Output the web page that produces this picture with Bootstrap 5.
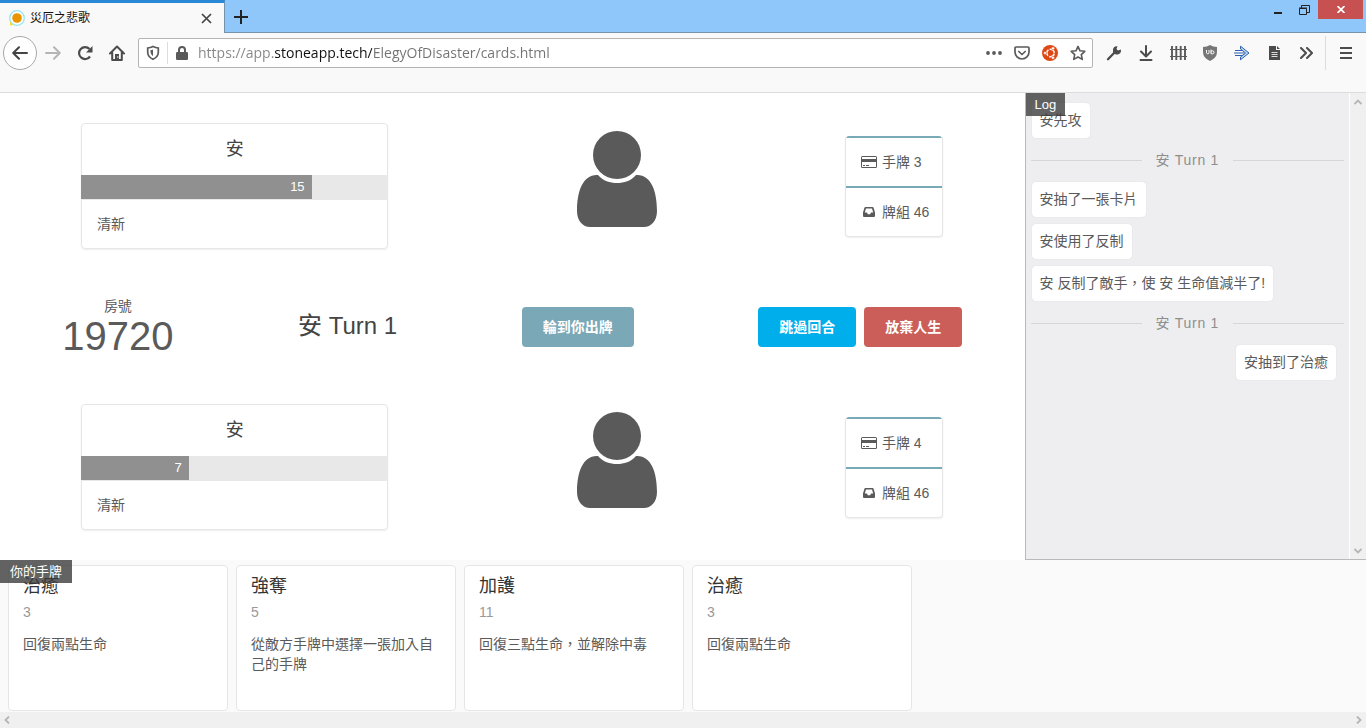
<!DOCTYPE html>
<html lang="zh-Hant">
<head>
<meta charset="utf-8">
<meta name="viewport" content="width=device-width, initial-scale=1">
<title>災厄之悲歌</title>
<link href="https://cdn.jsdelivr.net/npm/bootstrap@5.3.0/dist/css/bootstrap.min.css" rel="stylesheet">
<style>
  body { font-family: "Liberation Sans", "Noto Sans CJK TC", sans-serif; font-size: 14px; line-height: 20px; color: #5a5a5a; background: #fff; }
  svg { display: block; flex: none; }

  /* Browser chrome */
  .tab-strip { background: #8fc7fb; height: 33px; box-shadow: inset 0 -1px #7594ab; }
  .site-tab { width: 225px; background: #f9f9f9; border-top: 3px solid #2a88d6; border-right: 1px solid #7594ab; padding: 0 12px 0 8px; font-size: 12px; color: #111; }
  .bare { border: 0; background: none; padding: 0; color: #4c4c4c; display: flex; align-items: center; justify-content: center; }
  .new-tab { width: 32px; color: #222; }
  .win { height: 19px; width: 26px; color: #222; }
  .win-close { width: 45px; background: #c75050; color: #fff; margin-left: 1px; }
  .win-group { margin-right: 3px; }
  .tools { background: #f9f9f9; border-bottom: 1px solid #dcdcdc; padding: 3px 4px 22px 3px; }
  .tool { width: 32px; height: 34px; }
  .tool-back { width: 34px; border: 1px solid #a9a9a9; border-radius: 50%; background: #fff; }
  .menu-rule { width: 1px; height: 34px; background: #ddd; margin: 0 4px 0 3px; }
  .address { height: 30px; background: #fff; border: 1px solid #b4b4b4; border-radius: 2px; margin: 0 5px; }
  .address-btn { width: 28px; height: 28px; }
  .address-rule { width: 1px; height: 22px; background: #ddd; }
  .address-input { border: 0; outline: 0; padding: 0; margin-left: 2px; min-width: 0; font: 14px/26px "Open Sans", sans-serif; color: #737373;
    background: linear-gradient(90deg, #858585 77px, #111 77px 174px, #737373 174px); -webkit-background-clip: text; background-clip: text; -webkit-text-fill-color: transparent; }

  /* Board */
  .board { padding: 30px 0; }
  .fighter { width: 30%; border: 1px solid #e6e6e6; border-radius: 4px; box-shadow: 0 1px 2px #eee; }
  .fighter-name { font-size: 18px; line-height: 51px; color: #444; margin: 0; }
  .life { height: 25px; border-radius: 0; background: #e8e8e8; margin: 0 -1px; --bs-progress-bar-bg: #909090; font-size: 13px; }
  .life .progress-bar { padding-right: 7px; text-align: right; height: 24px; }
  .fighter-state { padding: 14px 15px; margin: 0; }
  .avatar { width: 132px; padding-bottom: 14px; }
  .piles { border: 1px solid #e6e6e6; border-top: 0; border-radius: 4px; box-shadow: 0 1px 2px #eee; list-style: none; margin: 0; padding: 0; overflow: hidden; }
  .pile { padding: 14px 13px 14px 15px; gap: 5px; }
  .pile-hand { border-top: 2px solid #78a9b6; border-bottom: 2px solid #78a9b6; }
  .room-no { font-size: 40px; line-height: 40px; }
  .room { padding-bottom: 2px; }
  .turn-title { font-size: 24px; line-height: 30px; color: #444; margin: 0; padding-bottom: 2px; }
  .act { --bs-btn-font-size: 14px; --bs-btn-font-weight: 700; --bs-btn-line-height: 20px; --bs-btn-padding-x: 21px; --bs-btn-padding-y: 10px; --bs-btn-border-radius: 4px; --bs-btn-border-width: 0; --bs-btn-color: #fff; --bs-btn-hover-color: #fff; }
  .act-wait { --bs-btn-bg: #7aa8b7; --bs-btn-hover-bg: #6d9bab; }
  .act-skip { --bs-btn-bg: #00aeeb; --bs-btn-hover-bg: #009fd8; }
  .act-quit { --bs-btn-bg: #cb5e58; --bs-btn-hover-bg: #bb514b; }

  /* Log */
  .corner-tag { position: absolute; top: 0; left: 0; background: rgba(60, 60, 60, .8); color: #fff; font-size: 13px; line-height: 23px; padding: 0 10px; font-weight: 400; margin: 0; }
  .log { background: #eeeef0; border-left: 1px solid #b9b9bb; border-bottom: 1px solid #b9b9bb; }
  .log-tag { padding: 0 9px; }
  .log-list { padding: 10px 5px; }
  .said { background: #fff; border-radius: 4px; padding: 7px 8px 8px; margin-left: 1px; box-shadow: 0 0 1px #ccc; }
  .said + .said { margin-top: 7px; }
  .said-own { margin-right: 8px; }
  .log-turn { height: 44px; gap: 14px; color: #8e8e8e; letter-spacing: .05em; }
  .log-turn::before, .log-turn::after { content: ""; flex: 1; height: 1px; background: #d6d6d8; }
  .bar-y { width: 17px; background: #f0f0f0; border-left: 1px solid #fff; padding: 6px 0 5px; }

  /* Hand */
  .hand { background: #fafafa; padding: 5px 8px 1px; gap: 8px; }
  .hand-card { width: 220px; min-height: 146px; background: #fff; border: 1px solid #e6e6e6; border-radius: 4px; padding: 8px 14px; }
  .hand-name { font-size: 18px; line-height: 24px; color: #333; margin: 0; }
  .hand-cost { color: #999; line-height: 20px; margin: 4px 0 12px; }
  .bar-x { height: 16px; background: #f0f0f0; padding: 0 4px; }
</style>
</head>
<body>
<svg class="d-none" aria-hidden="true">
  <symbol id="i-user" viewBox="0 0 80 96"><circle cx="40" cy="24" r="24" fill="#5a5a5a"/><path fill="#5a5a5a" d="M21 44C26 50 33 52 40 52s14-2 19-8C74 43 80 60 80 80c0 10-6 16-13 16H13C6 96 0 90 0 80 0 60 6 43 21 44Z"/></symbol>
  <symbol id="i-card" viewBox="0 0 16 12"><path fill="#5a5a5a" fill-rule="evenodd" d="M1.500 0h13A1.500 1.500 0 0 1 16 1.500v9a1.500 1.500 0 0 1-1.500 1.500h-13A1.500 1.500 0 0 1 0 10.500v-9A1.500 1.500 0 0 1 1.500 0ZM1 1v2h14V1ZM1 6v5h14V6ZM2 9h2v1H2Zm3 0h3v1H5Z"/></symbol>
  <symbol id="i-inbox" viewBox="0 0 16 12"><path fill="#5a5a5a" fill-rule="evenodd" d="M4.500 1h7q.8 0 1.100.8L14 6.500V10q0 1-1 1H3q-1 0-1-1V6.500L3.400 1.800Q3.700 1 4.500 1ZM5 2.500 3.800 6.500H6l.8 1.700h2.400L10 6.500h2.200L11 2.500Z"/></symbol>
</svg>

<div class="d-flex flex-column min-vh-100">
  <header>
    <div class="tab-strip d-flex align-items-stretch">
      <div class="site-tab d-flex align-items-center">
        <svg width="18" height="18" viewBox="0 0 18 18" class="me-1"><circle cx="9" cy="9" r="7.300" fill="#fff" stroke="#8fe6ee" stroke-width="1.300"/><path d="M2 12q1 3 4 4l-4 .5Z" fill="#f3dd35"/><circle cx="9" cy="9" r="4.800" fill="#ea9400"/></svg>
        <span class="flex-grow-1">災厄之悲歌</span>
        <button class="bare" type="button" aria-label="關閉分頁"><svg width="11" height="11" viewBox="0 0 11 11" stroke="#444" stroke-width="1.700"><path d="M1 1l9 9M10 1l-9 9"/></svg></button>
      </div>
      <button class="bare new-tab" type="button" aria-label="新分頁"><svg width="14" height="14" viewBox="0 0 14 14" stroke="currentColor" stroke-width="2"><path d="M7 0v14M0 7h14"/></svg></button>
      <div class="d-flex ms-auto align-items-start win-group">
        <button class="bare win" type="button" aria-label="最小化"><svg width="8" height="8" viewBox="0 0 8 8"><path d="M0 6h8v2H0Z" fill="#222"/></svg></button>
        <button class="bare win" type="button" aria-label="還原"><svg width="11" height="10" viewBox="0 0 11 10" fill="none" stroke="#222"><path d="M.5 3.500h7v6h-7Z M0 3h8M2.500 3V.5h8v7H8"/></svg></button>
        <button class="bare win win-close" type="button" aria-label="關閉"><svg width="8" height="7" viewBox="0 0 8 7" stroke="#fff" stroke-width="1.700"><path d="M.5 0l7 7M7.500 0l-7 7"/></svg></button>
      </div>
    </div>
    <div class="tools d-flex align-items-center">
      <button class="bare tool tool-back" type="button" aria-label="上一頁"><svg width="16" height="14" viewBox="0 0 16 14" fill="none" stroke="#444" stroke-width="2" stroke-linecap="round" stroke-linejoin="round"><path d="M15 7H1.500M7 1.200 1.200 7 7 12.800"/></svg></button>
      <button class="bare tool" type="button" aria-label="下一頁"><svg width="16" height="14" viewBox="0 0 16 14" fill="none" stroke="#b5b5b5" stroke-width="2" stroke-linecap="round" stroke-linejoin="round"><path d="M1 7h13.500M9 1.200 14.800 7 9 12.800"/></svg></button>
      <button class="bare tool" type="button" aria-label="重新整理"><svg width="16" height="16" viewBox="0 0 16 16"><path d="M13 11.500A6 6 0 1 1 12.500 4" fill="none" stroke="#4c4c4c" stroke-width="2.200"/><path d="M15.500 1v6.500H9Z" fill="#4c4c4c"/></svg></button>
      <button class="bare tool" type="button" aria-label="首頁"><svg width="16" height="16" viewBox="0 0 16 16"><path d="M1 8.500 8 1.500l7 7M3.200 7.500V15h9.600V7.500" fill="none" stroke="#4c4c4c" stroke-width="2" stroke-linejoin="round" stroke-linecap="round"/><path d="M6 15V9h4v6Z" fill="#4c4c4c"/><circle cx="8.800" cy="12" r=".7" fill="#fff"/></svg></button>
      <div class="address d-flex align-items-center flex-grow-1">
        <button class="bare address-btn" type="button" aria-label="追蹤保護"><svg width="14" height="16" viewBox="0 0 14 16"><path d="M7 1.500Q9.500 2.800 12.300 3v4.500Q12 12 7 14.300 2 12 1.700 7.500V3Q4.500 2.800 7 1.500Z" fill="none" stroke="#5a5a5a" stroke-width="1.700"/><path d="M7 4.500v6.800Q4.500 9.500 4.500 7V5Q6 5 7 4.500Z" fill="#5a5a5a"/></svg></button>
        <span class="address-rule"></span>
        <button class="bare address-btn" type="button" aria-label="網站資訊"><svg width="12" height="14" viewBox="0 0 12 14"><path d="M3 7V4a3 3 0 0 1 6 0v3" fill="none" stroke="#5a5a5a" stroke-width="2"/><rect y="6" width="12" height="8" rx="1.200" fill="#5a5a5a"/></svg></button>
        <input class="address-input flex-grow-1" type="text" aria-label="網址" value="https://app.stoneapp.tech/ElegyOfDisaster/cards.html">
        <button class="bare address-btn" type="button" aria-label="更多"><svg width="16" height="4" viewBox="0 0 16 4" fill="#5a5a5a"><circle cx="2" cy="2" r="1.900"/><circle cx="8" cy="2" r="1.900"/><circle cx="14" cy="2" r="1.900"/></svg></button>
        <button class="bare address-btn" type="button" aria-label="Pocket"><svg width="16" height="14" viewBox="0 0 16 14" fill="none" stroke="#5a5a5a" stroke-width="1.700" stroke-linecap="round" stroke-linejoin="round"><path d="M2 1h12q1 0 1 1v4a7 7 0 0 1-14 0V2q0-1 1-1ZM4.800 5.500 8 8.500l3.200-3"/></svg></button>
        <button class="bare address-btn" type="button" aria-label="Ubuntu"><svg width="16" height="16" viewBox="0 0 16 16"><circle cx="8" cy="8" r="8" fill="#dd4814"/><circle cx="8.500" cy="8" r="3.700" fill="none" stroke="#fff" stroke-width="1.500" stroke-dasharray="6.500 1.250" stroke-dashoffset="-.6"/><g fill="#fff" stroke="#dd4814" stroke-width=".5"><circle cx="3" cy="8" r="1.500"/><circle cx="11" cy="3.300" r="1.500"/><circle cx="11" cy="12.700" r="1.500"/></g></svg></button>
        <button class="bare address-btn" type="button" aria-label="書籤"><svg width="16" height="16" viewBox="0 0 16 16"><path d="m8 1.400 2 4.400 4.800.5-3.500 3.300 1 4.800L8 12l-4.300 2.400 1-4.800L1.200 6.300 6 5.800Z" fill="none" stroke="#5a5a5a" stroke-width="1.600" stroke-linejoin="round"/></svg></button>
      </div>
      <button class="bare tool" type="button" aria-label="工具"><svg width="16" height="16" viewBox="0 0 16 16"><path d="M2 14.200 8.500 7.500" stroke="#4c4c4c" stroke-width="2.300" stroke-linecap="round"/><path d="M11.500 1.200 10.500 4l1.500 1.500 2.900-1Q15.500 7.500 13 9q-2 1-4 0L7 7Q6.300 4 8 2.300 9.500.9 11.500 1.200Z" fill="#4c4c4c"/></svg></button>
      <button class="bare tool" type="button" aria-label="下載"><svg width="14" height="16" viewBox="0 0 14 16" fill="none" stroke="#4c4c4c" stroke-width="2" stroke-linecap="round" stroke-linejoin="round"><path d="M7 1v10M2 6.500l5 5 5-5M1.500 15h11"/></svg></button>
      <button class="bare tool" type="button" aria-label="柵欄"><svg width="17" height="14" viewBox="0 0 17 14" stroke="#5a5a5a"><path d="M2 0v14M6.300 0v14M10.700 0v14M15 0v14" stroke-width="1.900"/><path d="M0 3.500h17M0 10.500h17" stroke-width="1.200"/></svg></button>
      <button class="bare tool" type="button" aria-label="uBlock"><svg width="14" height="16" viewBox="0 0 14 16"><path d="M7 0q3 2 7 2v5q0 6-7 9-7-3-7-9V2q4 0 7-2Z" fill="#777"/><path d="M3.500 5v2.500q0 1.300 1.300 1.300T6 7.500V5M8 4.500v4.300M8 7.300a1.500 1.500 0 1 1 1.500 1.500H8" fill="none" stroke="#fff"/></svg></button>
      <button class="bare tool" type="button" aria-label="轉向"><svg width="16" height="16" viewBox="0 0 16 16" fill="none" stroke="#2f5fae"><path d="M1 5.500h8M0 8h10M1 10.500h8" stroke-width="1.100"/><path d="M6.500 4V1.200L15 8l-8.500 6.800V12L11.500 8Z" fill="#b8d6f5"/></svg></button>
      <button class="bare tool" type="button" aria-label="文件"><svg width="11" height="14" viewBox="0 0 11 14"><path d="M0 0h7v4h4v10H0ZM8 0l3 3H8Z" fill="#4c4c4c"/><path d="M2.500 6.500h6M2.500 8.500h6M2.500 10.500h6" stroke="#ddd"/></svg></button>
      <button class="bare tool" type="button" aria-label="更多工具"><svg width="13" height="12" viewBox="0 0 13 12" fill="none" stroke="#4c4c4c" stroke-width="2" stroke-linecap="round" stroke-linejoin="round"><path d="m1 1 5 5-5 5M7 1l5 5-5 5"/></svg></button>
      <span class="menu-rule"></span>
      <button class="bare tool" type="button" aria-label="選單"><svg width="12" height="12" viewBox="0 0 12 12" stroke="#4c4c4c" stroke-width="2"><path d="M0 1h12M0 6h12M0 11h12"/></svg></button>
    </div>
  </header>

  <main class="row g-0 flex-grow-1">
    <section class="col-9 board d-flex flex-column justify-content-between">
      <div class="d-flex justify-content-around align-items-center">
        <article class="fighter">
          <h2 class="fighter-name text-center fw-normal">安</h2>
          <div class="progress life" role="progressbar" aria-label="生命值" aria-valuenow="15" aria-valuemin="0" aria-valuemax="20"><div class="progress-bar" style="width:75%">15</div></div>
          <p class="fighter-state">清新</p>
        </article>
        <div class="avatar d-flex justify-content-center"><svg width="80" height="96"><use href="#i-user"/></svg></div>
        <ul class="piles">
          <li class="pile pile-hand d-flex align-items-center"><svg width="16" height="12"><use href="#i-card"/></svg>手牌 3</li>
          <li class="pile d-flex align-items-center"><svg width="16" height="12"><use href="#i-inbox"/></svg>牌組 46</li>
        </ul>
      </div>

      <div class="d-flex justify-content-around align-items-center">
        <div class="room text-center">
          <div>房號</div>
          <div class="room-no">19720</div>
        </div>
        <h1 class="turn-title fw-normal">安 Turn 1</h1>
        <button class="btn act act-wait" type="button">輪到你出牌</button>
        <div class="d-flex gap-2">
          <button class="btn act act-skip" type="button">跳過回合</button>
          <button class="btn act act-quit" type="button">放棄人生</button>
        </div>
      </div>

      <div class="d-flex justify-content-around align-items-center">
        <article class="fighter">
          <h2 class="fighter-name text-center fw-normal">安</h2>
          <div class="progress life" role="progressbar" aria-label="生命值" aria-valuenow="7" aria-valuemin="0" aria-valuemax="20"><div class="progress-bar" style="width:35%">7</div></div>
          <p class="fighter-state">清新</p>
        </article>
        <div class="avatar d-flex justify-content-center"><svg width="80" height="96"><use href="#i-user"/></svg></div>
        <ul class="piles">
          <li class="pile pile-hand d-flex align-items-center"><svg width="16" height="12"><use href="#i-card"/></svg>手牌 4</li>
          <li class="pile d-flex align-items-center"><svg width="16" height="12"><use href="#i-inbox"/></svg>牌組 46</li>
        </ul>
      </div>
    </section>

    <aside class="col-3 log d-flex position-relative">
      <h2 class="corner-tag log-tag">Log</h2>
      <div class="log-list flex-grow-1 d-flex flex-column">
        <div class="said align-self-start">安先攻</div>
        <div class="log-turn d-flex align-items-center">安 Turn 1</div>
        <div class="said align-self-start">安抽了一張卡片</div>
        <div class="said align-self-start">安使用了反制</div>
        <div class="said align-self-start">安 反制了敵手，使 安 生命值減半了!</div>
        <div class="log-turn d-flex align-items-center">安 Turn 1</div>
        <div class="said said-own align-self-end">安抽到了治癒</div>
      </div>
      <div class="bar-y d-flex flex-column justify-content-between align-items-center">
        <svg width="8" height="6" viewBox="0 0 8 6" fill="none" stroke="#b5b5b5" stroke-width="1.800"><path d="m.5 5 3.500-3.500L7.500 5"/></svg>
        <svg width="8" height="6" viewBox="0 0 8 6" fill="none" stroke="#b5b5b5" stroke-width="1.800"><path d="M.5 1 4 4.500 7.500 1"/></svg>
      </div>
    </aside>
  </main>

  <footer>
    <div class="hand d-flex position-relative">
      <article class="hand-card"><h3 class="hand-name fw-normal">治癒</h3><p class="hand-cost">3</p><p class="mb-0">回復兩點生命</p></article>
      <article class="hand-card"><h3 class="hand-name fw-normal">強奪</h3><p class="hand-cost">5</p><p class="mb-0">從敵方手牌中選擇一張加入自己的手牌</p></article>
      <article class="hand-card"><h3 class="hand-name fw-normal">加護</h3><p class="hand-cost">11</p><p class="mb-0">回復三點生命，並解除中毒</p></article>
      <article class="hand-card"><h3 class="hand-name fw-normal">治癒</h3><p class="hand-cost">3</p><p class="mb-0">回復兩點生命</p></article>
      <h2 class="corner-tag">你的手牌</h2>
    </div>
    <div class="bar-x d-flex justify-content-between align-items-center">
      <svg width="6" height="8" viewBox="0 0 6 8" fill="none" stroke="#b5b5b5" stroke-width="1.800"><path d="M5 .5 1.500 4 5 7.500"/></svg>
      <svg width="6" height="8" viewBox="0 0 6 8" fill="none" stroke="#b5b5b5" stroke-width="1.800"><path d="M1 .5 4.500 4 1 7.500"/></svg>
    </div>
  </footer>
</div>
<script src="https://cdn.jsdelivr.net/npm/bootstrap@5.3.0/dist/js/bootstrap.bundle.min.js"></script>
</body>
</html>
